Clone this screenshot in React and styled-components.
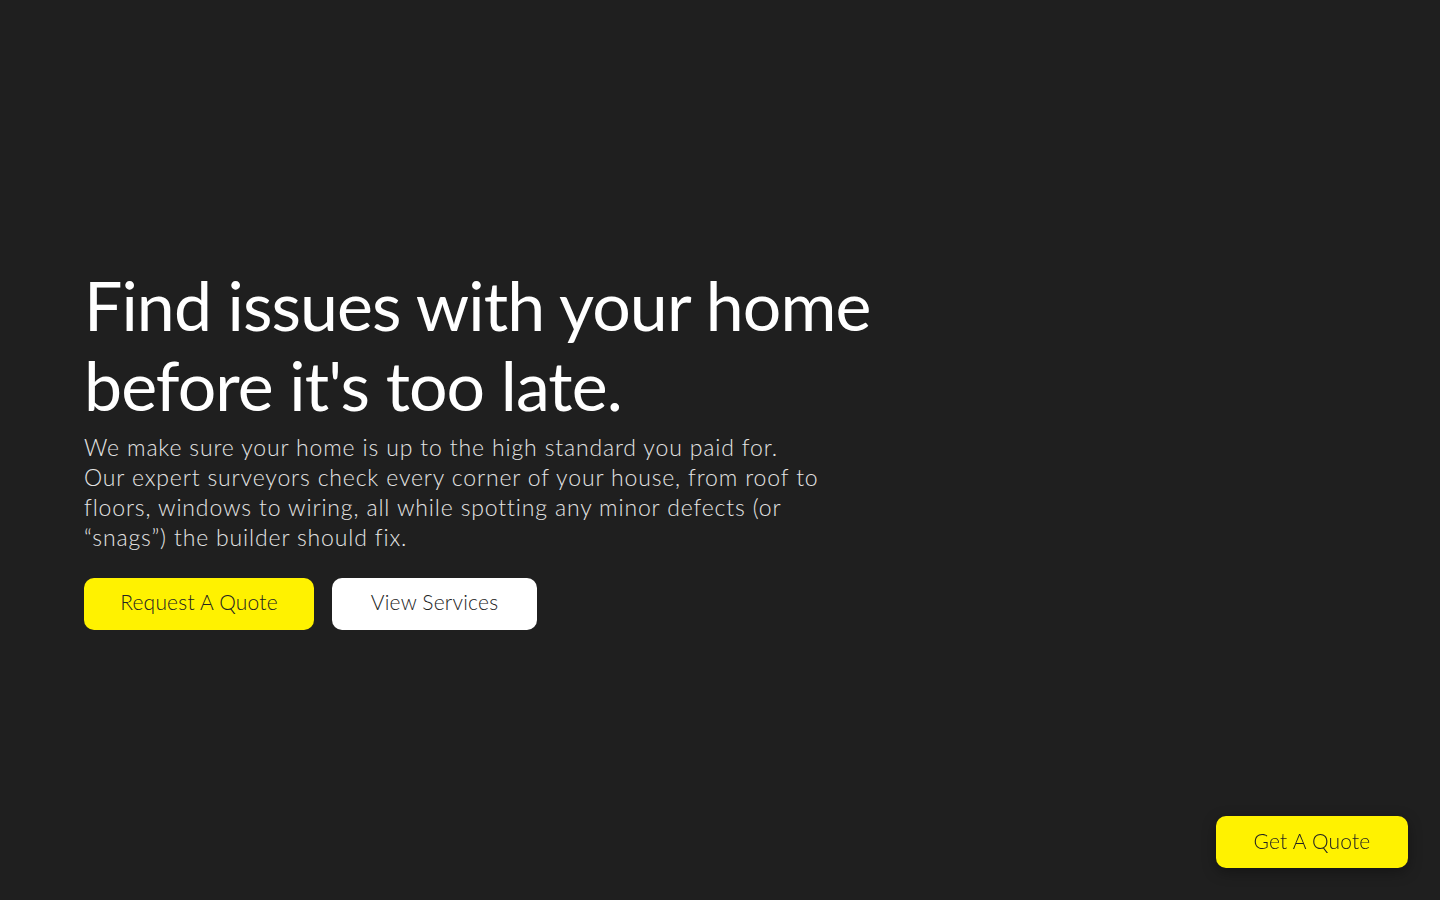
import React from 'react'
import styled, { createGlobalStyle } from 'styled-components'

const GlobalStyle = createGlobalStyle`
  * { box-sizing: border-box; }
  html, body {
    margin: 0;
    padding: 0;
    background: #1f1f1f;
    font-family: "Lato", "Noto Sans", sans-serif;
  }
`

const Hero = styled.section`
  min-height: 100vh;
  display: flex;
  flex-direction: column;
  justify-content: center;
  padding: 0 84px 6px;
`

const Title = styled.h1`
  margin: 0 0 7px;
  font-size: 68px;
  line-height: 80px;
  font-weight: 400;
  color: #fff;
  letter-spacing: -0.9px;
`

const Lead = styled.p`
  margin: 0 0 26px;
  font-size: 23px;
  line-height: 30px;
  font-weight: 300;
  color: #e4e4e4;
  letter-spacing: 0.85px;
  white-space: nowrap;
`

const Actions = styled.div`
  display: flex;
  gap: 18px;
`

const Button = styled.button`
  width: ${p => p.$width}px;
  height: 52px;
  padding: 0 0 4px;
  border: none;
  border-radius: 10px;
  background: ${p => (p.$light ? '#ffffff' : '#fff200')};
  color: #222;
  font-family: inherit;
  font-size: 21px;
  font-weight: 300;
  letter-spacing: 0.2px;
  cursor: pointer;
`

const Floating = styled(Button)`
  position: fixed;
  right: 32px;
  bottom: 32px;
  box-shadow: 0 4px 14px rgba(0, 0, 0, 0.35);
`

export default function App() {
  return (
    <>
      <GlobalStyle />
      <Hero>
        <Title>
          Find issues with your home
          <br />
          before it's too late.
        </Title>
        <Lead>
          We make sure your home is up to the high standard you paid for.
          <br />
          Our expert surveyors check every corner of your house, from roof to
          <br />
          floors, windows to wiring, all while spotting any minor defects (or
          <br />
          “snags”) the builder should fix.
        </Lead>
        <Actions>
          <Button $width={230}>Request A Quote</Button>
          <Button $light $width={205}>View Services</Button>
        </Actions>
      </Hero>
      <Floating $width={192}>Get A Quote</Floating>
    </>
  )
}
